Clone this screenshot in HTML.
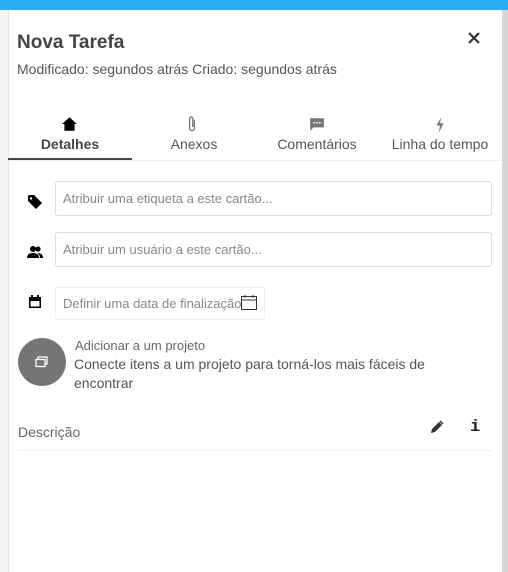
<!DOCTYPE html>
<html><head><meta charset="utf-8"><style>
*{box-sizing:border-box;margin:0;padding:0}
body{width:508px;height:572px;overflow:hidden;background:#f5f5f5;font-family:"Liberation Sans",sans-serif;position:relative}
.top{position:absolute;left:0;top:0;width:508px;height:10px;background:#2aaef5}
.panel{position:absolute;left:8px;top:10px;width:494px;height:562px;background:#fff;border-left:1px solid #e4e4e4}
.sb{position:absolute;left:502px;top:10px;width:6px;height:562px;background:#d6d6d6}
.a{position:absolute;white-space:nowrap}
.inp{position:absolute;border:1px solid #ddd;border-radius:3px;font-size:13px;color:#888;padding-left:7px;display:flex;align-items:center}
.tab{position:absolute;top:136px;font-size:14px;color:#555;text-align:center}
</style></head><body>
<div class="top"></div>
<div class="panel"></div>
<div class="sb"></div>
<div class="a" style="left:17px;top:32px;font-size:19px;font-weight:bold;color:#444">Nova Tarefa</div>
<div class="a" style="left:17px;top:61px;font-size:14px;color:#555">Modificado: segundos atrás Criado: segundos atrás</div>
<svg class="a" style="left:467px;top:31px" width="14" height="14" viewBox="0 0 14 14"><path d="M2 2L12 12M12 2L2 12" stroke="#333" stroke-width="2.2"/></svg>
<svg class="a" style="left:61px;top:116px" width="17" height="16" viewBox="0 0 15 14"><path d="M7.5 1L1 7h2v6h9V7h2z" fill="#000"/></svg>
<svg class="a" style="left:186px;top:115px" width="12" height="18" viewBox="0 0 10 15"><path d="M7 4v7a2 2 0 0 1-4 0V3a1.3 1.3 0 0 1 2.6 0v7" fill="none" stroke="#777" stroke-width="1.1"/></svg>
<svg class="a" style="left:309px;top:117px" width="16" height="15" viewBox="0 0 14 13"><path d="M1 1h12v8H4l-3 3z" fill="#777"/><circle cx="4.5" cy="5" r=".8" fill="#fff"/><circle cx="7" cy="5" r=".8" fill="#fff"/><circle cx="9.5" cy="5" r=".8" fill="#fff"/></svg>
<svg class="a" style="left:434px;top:116px" width="12" height="18" viewBox="0 0 10 15"><path d="M6 1L2 8h3l-1 6 4-8H5z" fill="#777"/></svg>
<div class="tab" style="left:8px;width:124px;font-weight:bold;color:#444">Detalhes</div>
<div class="tab" style="left:132px;width:124px">Anexos</div>
<div class="tab" style="left:256px;width:122px">Comentários</div>
<div class="tab" style="left:378px;width:124px">Linha do tempo</div>
<div class="a" style="left:8px;top:160px;width:494px;height:1px;background:#eee"></div>
<div class="a" style="left:8px;top:158px;width:124px;height:2px;background:#444"></div>
<svg class="a" style="left:27px;top:194px" width="16" height="16" viewBox="0 0 16 16"><path d="M1 2v5l8 8 6-6-8-8H2z" fill="#000"/><circle cx="4" cy="4.5" r="1.2" fill="#fff"/></svg>
<div class="inp" style="left:55px;top:181px;width:437px;height:35px">Atribuir uma etiqueta a este cartão...</div>
<svg class="a" style="left:27px;top:245px" width="17" height="14" viewBox="0 0 17 14"><circle cx="6" cy="4" r="3" fill="#000"/><circle cx="11" cy="4" r="2.6" fill="#000"/><path d="M0 13c0-4 3-5 6-5s6 1 6 5zM10 8c3 0 6 1 6 5h-3c0-2-1-4-3-5z" fill="#000"/></svg>
<div class="inp" style="left:55px;top:232px;width:437px;height:35px">Atribuir um usuário a este cartão...</div>
<svg class="a" style="left:28px;top:295px" width="14" height="14" viewBox="0 0 14 14"><path d="M1 2h12v11H1z" fill="#000"/><rect x="2.5" y="6" width="9" height="5.5" fill="#fff"/><rect x="3" y="0" width="2" height="3" fill="#000"/><rect x="9" y="0" width="2" height="3" fill="#000"/></svg>
<div class="inp" style="left:55px;top:287px;width:210px;height:33px;border-color:#eee">Definir uma data de finalização</div>
<svg class="a" style="left:241px;top:295px" width="16" height="15" viewBox="0 0 16 15"><rect x=".5" y="1.5" width="15" height="13" fill="#fff" stroke="#333"/><path d="M.5 5h15M4 0v3M12 0v3" stroke="#333"/></svg>
<div class="a" style="left:18px;top:338px;width:48px;height:48px;border-radius:50%;background:#757575"></div>
<svg class="a" style="left:34px;top:354px" width="16" height="16" viewBox="0 0 16 16"><rect x="4" y="3" width="9" height="7" fill="none" stroke="#fff" stroke-width="1.3"/><rect x="2" y="5.5" width="9" height="7" fill="#757575" stroke="#fff" stroke-width="1.3"/></svg>
<div class="a" style="left:75px;top:338px;font-size:13px;color:#666">Adicionar a um projeto</div>
<div class="a" style="left:74px;top:355px;font-size:14px;color:#555;line-height:19px">Conecte itens a um projeto para torná-los mais fáceis de<br>encontrar</div>
<div class="a" style="left:18px;top:424px;font-size:14px;color:#666">Descrição</div>
<svg class="a" style="left:430px;top:420px" width="14" height="14" viewBox="0 0 14 14"><path d="M1 13l1-4 7-7 3 3-7 7z" fill="#333"/><path d="M10 1l3 3" stroke="#333" stroke-width="1.5"/></svg>
<div class="a" style="left:470px;top:418px;font-size:17px;font-weight:bold;color:#222;font-family:'Liberation Mono',monospace">i</div>
<div class="a" style="left:18px;top:450px;width:474px;height:1px;background:#eee"></div>
</body></html>
